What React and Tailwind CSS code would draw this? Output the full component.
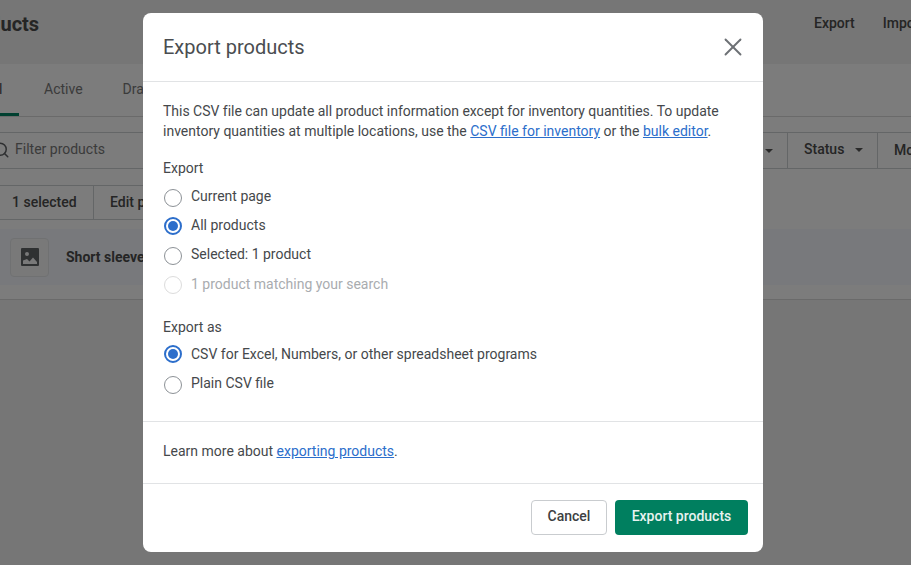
import { X, Search } from 'lucide-react';

const font = { fontFamily: 'Roboto, sans-serif' };

function Caret() {
  return <span className="inline-block border-x-[4px] border-t-[4px] border-x-transparent border-t-[#555]" />;
}

function ImageIcon() {
  return (
    <svg width="18" height="18" viewBox="0 0 18 18">
      <path fill="#5f6265" fillRule="evenodd" d="M1 0h16a1 1 0 0 1 1 1v16a1 1 0 0 1-1 1H1a1 1 0 0 1-1-1V1a1 1 0 0 1 1-1zm1 12.5V16h14v-2l-4-4.5-3.5 4-2.5-2.5zM6 4a2 2 0 1 0 0 4 2 2 0 0 0 0-4z" />
    </svg>
  );
}

function Radio({ checked, disabled, label, className }) {
  return (
    <label className={`flex items-center h-[20px] ${className || ''}`}>
      {checked ? (
        <span className="w-[18px] h-[18px] ml-px mt-px rounded-full border-2 border-[#2c6ecb] bg-white flex items-center justify-center">
          <span className="w-[10px] h-[10px] rounded-full bg-[#2c6ecb]" />
        </span>
      ) : (
        <span className={`w-[18px] h-[18px] ml-px mt-[3px] rounded-full border bg-white ${disabled ? 'border-[#dcdcdc]' : 'border-[#8c9196]'}`} />
      )}
      <span className={`ml-[9px] text-[14px] leading-[20px] ${disabled ? 'text-[#a9acaf]' : 'text-[#45484b]'}`}>{label}</span>
    </label>
  );
}

function Background() {
  return (
    <div className="w-[911px] h-[565px] bg-[#ececec] overflow-hidden text-[#4a4a4a]">
      <div className="h-[64px] flex justify-between items-start pt-[10px]">
        <h1 className="text-[20px] leading-[28px] font-bold -ml-[42px]">Products</h1>
        <div className="flex gap-[28px] text-[14px] font-medium pt-[3px] -mr-[60px] w-[157px]">
          <span>Export</span>
          <span>Import</span>
        </div>
      </div>
      <div className="h-[236px] bg-[#f8f8f8] border-b border-[#d5d5d5]">
        <div className="h-[53px] border-b border-[#d5d5d5] flex text-[14px] text-[#777] relative">
          <span className="-ml-[27px] w-[46px] pl-[13.5px] pt-[15px] text-left text-[#4a4a4a] border-b-[3px] border-[#008060] h-[52px]">All</span>
          <span className="ml-[25px] pt-[15px]">Active</span>
          <span className="ml-[40px] pt-[15px]">Draft</span>
        </div>
        <div className="mt-[15px] h-[37px] flex border-y border-[#c9cccf] text-[14px]">
          <div className="flex-1 flex items-center text-[#777] pb-[2px]">
            <Search size={18} className="-ml-[8px] mr-[5px] text-[#5c5f62]" />
            Filter products
          </div>
          <div className="w-[30px] border-r border-[#c9cccf] flex items-center justify-start pl-[7px]">
            <Caret />
          </div>
          <div className="w-[90px] border-r border-[#c9cccf] flex items-center pl-[16px] gap-[11px] font-medium pb-[2px]">
            Status <Caret />
          </div>
          <div className="w-[33px] pl-[16px] -mb-px flex items-center font-medium whitespace-nowrap pb-[2px]">More filters</div>
        </div>
        <div className="mt-[16px] h-[35px] flex border-y border-[#c9cccf] w-[300px] text-[14px] font-medium">
          <div className="w-[94px] border-r border-[#c9cccf] flex items-center pl-[12px]">1 selected</div>
          <div className="pl-[16px] flex items-center">Edit products</div>
        </div>
        <div className="mt-[9px] h-[56px] bg-[#f0f3f8] flex items-center pl-[10px] text-[14px] font-bold">
          <div className="w-[39px] h-[39px] rounded border border-[#e1e3e5] bg-[#f2f2f3] flex items-center justify-center">
            <ImageIcon />
          </div>
          <span className="ml-[17px]">Short sleeve t-shirt</span>
        </div>
      </div>
    </div>
  );
}

export default function App() {
  return (
    <div className="relative w-[911px] h-[565px] overflow-hidden" style={font}>
      <Background />
      <div className="absolute inset-0 bg-black/50 pt-[13px] pl-[143px]">
        <div className="w-[620px] h-[539px] bg-white rounded-lg flex flex-col text-[#45484b]">
          <div className="h-[69px] border-b border-[#e1e3e5] flex items-center justify-between pl-[20px] pr-[15px] shrink-0">
            <h2 className="text-[20px] leading-[28px] text-[#4a4d50]">Export products</h2>
            <X size={30} strokeWidth={1.5} className="text-[#6d7175]" />
          </div>
          <div className="flex-1 px-[20px] pt-[19px] text-[14px] leading-[20px]">
            <p>
              <span className="tracking-[-0.02px]">This CSV file can update all product information except for inventory quantities. To update</span>{' '}
              inventory quantities at multiple locations, use the{' '}
              <a className="text-[#2c6ecb] underline">CSV file for inventory</a> or the{' '}
              <a className="text-[#2c6ecb] underline">bulk editor</a>.
            </p>
            <p className="mt-[17px]">Export</p>
            <div className="mt-[8px] flex flex-col gap-[9.2px]">
              <Radio label="Current page" />
              <Radio checked label="All products" />
              <Radio label="Selected: 1 product" />
              <Radio disabled label="1 product matching your search" />
            </div>
            <p className="mt-[23.4px]">Export as</p>
            <div className="mt-[7px] flex flex-col gap-[9.2px]">
              <Radio checked label="CSV for Excel, Numbers, or other spreadsheet programs" />
              <Radio label="Plain CSV file" />
            </div>
          </div>
          <div className="h-[62px] border-t border-[#e1e3e5] flex items-center px-[20px] pb-[2px] text-[14px] shrink-0">
            <p>
              Learn more about <a className="text-[#2c6ecb] underline">exporting products</a>.
            </p>
          </div>
          <div className="h-[69px] border-t border-[#e1e3e5] flex items-start justify-end gap-[8px] pr-[15px] pt-[16px] shrink-0">
            <button className="w-[76px] h-[35px] pb-[2px] rounded border border-[#c9cccf] bg-white text-[14px] font-medium text-[#3d3f42]">Cancel</button>
            <button className="w-[133px] h-[35px] pb-[2px] rounded bg-[#007f5f] text-[14px] font-medium text-[#e8f3f0]">Export products</button>
          </div>
        </div>
      </div>
    </div>
  );
}
